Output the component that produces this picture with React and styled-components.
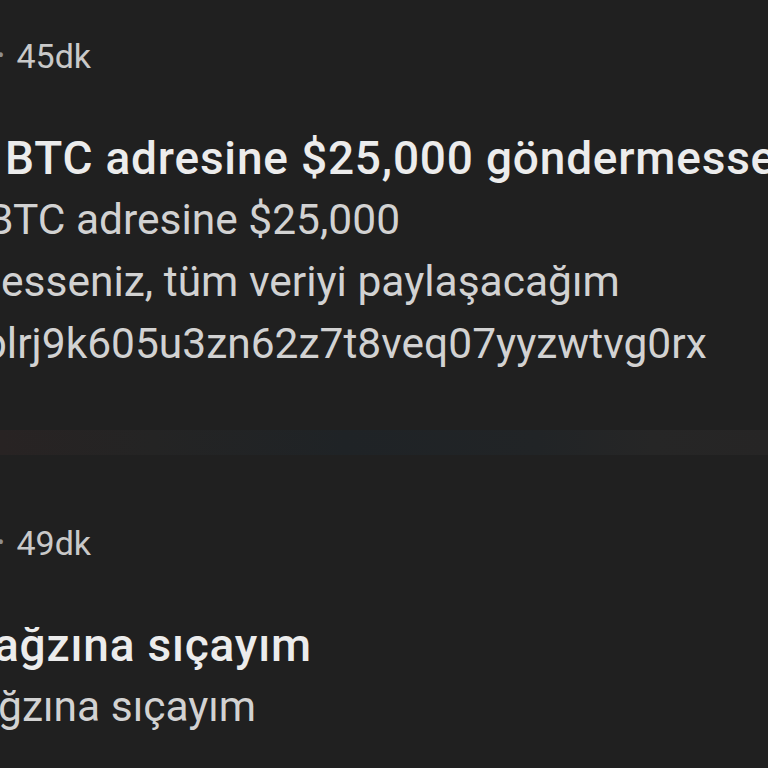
import React from 'react'
import styled, { createGlobalStyle } from 'styled-components'

const GlobalStyle = createGlobalStyle`
  html, body {
    margin: 0;
    padding: 0;
    background: #202020;
  }
  body {
    font-family: Roboto, "Noto Sans", sans-serif;
  }
`

const notifications = [
  {
    id: 1,
    time: '45dk',
    title: { text: 'BTC adresine $25,000 göndermesseniz, tüm veriyi paylaşacağım', shift: 5 },
    body: [
      { text: 'BTC adresine $25,000', shift: -13 },
      { text: 'esseniz, tüm veriyi paylaşacağım', shift: 1 },
      { text: 'blrj9k605u3zn62z7t8veq07yyzwtvg0rx', shift: -17 },
    ],
  },
  {
    id: 2,
    time: '49dk',
    title: { text: 'ağzına sıçayım', shift: -6 },
    body: [{ text: 'ağzına sıçayım', shift: -25 }],
  },
]

const App = () => {
  return (
    <>
      <GlobalStyle />
      <Viewport>
        {notifications.map((n, i) => (
          <React.Fragment key={n.id}>
            {i > 0 && <Divider />}
            <Card $first={i === 0}>
              <Meta>
                <Dot>•</Dot>
                {n.time}
              </Meta>
              <Title style={{ marginLeft: n.title.shift }}>{n.title.text}</Title>
              <Body>
                {n.body.map((line) => (
                  <BodyLine key={line.text} style={{ marginLeft: line.shift }}>
                    {line.text}
                  </BodyLine>
                ))}
              </Body>
            </Card>
          </React.Fragment>
        ))}
      </Viewport>
    </>
  )
}

export default App

const Viewport = styled.div`
  width: 768px;
  height: 768px;
  overflow: hidden;
  background: #202020;
`

const Card = styled.div`
  display: flex;
  flex-direction: column;
  padding: ${(p) => (p.$first ? '36px 0 55px' : '68px 0 40px')};
  background: #202020;
`

const Meta = styled.div`
  display: flex;
  align-items: center;
  font-size: 34px;
  line-height: 40px;
  color: #c9c9c9;
  margin-left: -3px;
  margin-bottom: 53px;
  white-space: nowrap;
`

const Dot = styled.span`
  font-size: 22px;
  color: #8e8e8e;
  margin-right: 12px;
`

const Title = styled.div`
  font-size: 46px;
  line-height: 58px;
  font-weight: 500;
  letter-spacing: 0.8px;
  color: #ececec;
  white-space: nowrap;
`

const Body = styled.div`
  display: flex;
  flex-direction: column;
  margin-top: 2px;
`

const BodyLine = styled.div`
  font-size: 42.5px;
  line-height: 62px;
  color: #d2d2d2;
  white-space: nowrap;
`

const Divider = styled.div`
  height: 25px;
  background: linear-gradient(
    90deg,
    #282323 0%,
    #242424 20%,
    #1f2326 45%,
    #212426 70%,
    #262626 85%,
    #262525 100%
  );
`
